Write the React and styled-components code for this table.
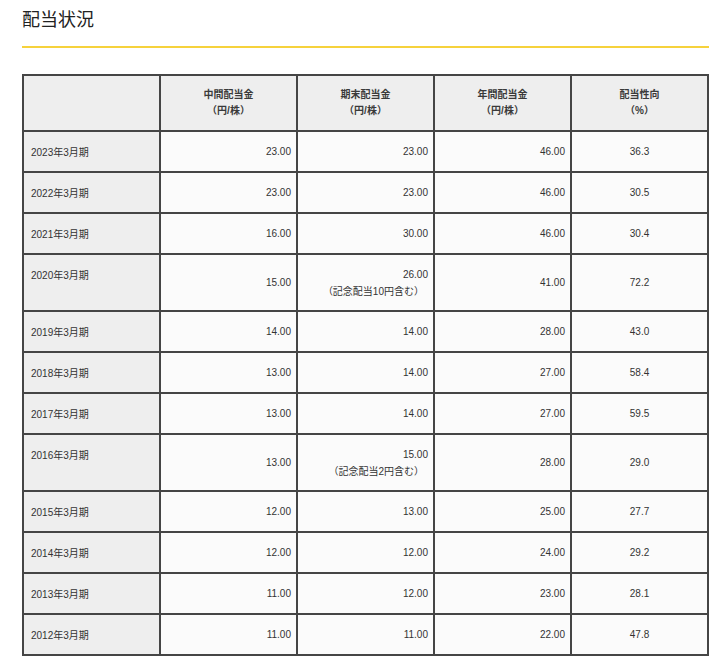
import React from "react";
import styled, { createGlobalStyle } from "styled-components";

const GlobalStyle = createGlobalStyle`
  body {
    margin: 0;
    background: #fff;
    font-family: "Liberation Sans", "Noto Sans CJK JP", sans-serif;
    color: #333;
  }
`;

const Page = styled("div")`
  padding: 7px 11px 8px 22px;
`;

const Title = styled("h2")`
  margin: 0;
  font-size: 18px;
  font-weight: 400;
  line-height: 26px;
  color: #222;
  padding-bottom: 13px;
  border-bottom: 2px solid #f6d23c;
`;

const Table = styled("table")`
  margin-top: 26px;
  width: 100%;
  border-collapse: collapse;
  table-layout: fixed;
  font-size: 10px;
  line-height: 17px;
`;

const HeadCell = styled("th")`
  background: #eeeeee;
  border: 2px solid #454545;
  font-weight: bold;
  text-align: center;
  height: 54px;
  padding: 0 4px;
  color: #3a3a3a;
  line-height: 16px;
`;

const LabelCell = styled("th")`
  background: #eeeeee;
  border: 2px solid #454545;
  font-weight: normal;
  text-align: left;
  vertical-align: top;
  padding: 12px 7px 0;
  height: ${(p) => (p.$tall ? 57 : 41)}px;
  box-sizing: border-box;
`;

const Cell = styled("td")`
  background: #fbfbfb;
  border: 2px solid #454545;
  text-align: ${(p) => (p.$center ? "center" : "right")};
  padding: 0 5px;
`;

const Note = styled("span")`
  display: block;
  padding-right: 4px;
`;

const rows = [
  ["2023年3月期", "23.00", "23.00", "46.00", "36.3"],
  ["2022年3月期", "23.00", "23.00", "46.00", "30.5"],
  ["2021年3月期", "16.00", "30.00", "46.00", "30.4"],
  ["2020年3月期", "15.00", "26.00", "41.00", "72.2", "（記念配当10円含む）"],
  ["2019年3月期", "14.00", "14.00", "28.00", "43.0"],
  ["2018年3月期", "13.00", "14.00", "27.00", "58.4"],
  ["2017年3月期", "13.00", "14.00", "27.00", "59.5"],
  ["2016年3月期", "13.00", "15.00", "28.00", "29.0", "（記念配当2円含む）"],
  ["2015年3月期", "12.00", "13.00", "25.00", "27.7"],
  ["2014年3月期", "12.00", "12.00", "24.00", "29.2"],
  ["2013年3月期", "11.00", "12.00", "23.00", "28.1"],
  ["2012年3月期", "11.00", "11.00", "22.00", "47.8"],
];

const heads = [
  ["中間配当金", "（円/株）"],
  ["期末配当金", "（円/株）"],
  ["年間配当金", "（円/株）"],
  ["配当性向", "（%）"],
];

export default function App() {
  return (
    <Page>
      <GlobalStyle />
      <Title>配当状況</Title>
      <Table>
        <thead>
          <tr>
            <HeadCell />
            {heads.map(([a, b]) => (
              <HeadCell key={a}>
                {a}
                <br />
                {b}
              </HeadCell>
            ))}
          </tr>
        </thead>
        <tbody>
          {rows.map(([label, mid, end, year, ratio, note]) => (
            <tr key={label}>
              <LabelCell $tall={!!note}>{label}</LabelCell>
              <Cell>{mid}</Cell>
              <Cell>
                {end}
                {note && <Note>{note}</Note>}
              </Cell>
              <Cell>{year}</Cell>
              <Cell $center>{ratio}</Cell>
            </tr>
          ))}
        </tbody>
      </Table>
    </Page>
  );
}
